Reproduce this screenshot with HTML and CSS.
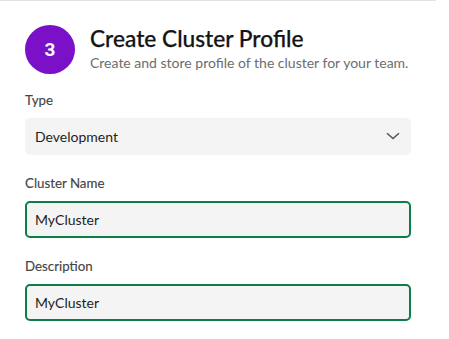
FILE: index.html
```html
<!DOCTYPE html>
<html>
<head>
<meta charset="utf-8">
<link rel="stylesheet" href="styles.css">
</head>
<body>
<div class="card">
  <div class="header">
    <div class="step">3</div>
    <div class="heading">
      <div class="title">Create Cluster Profile</div>
      <div class="subtitle">Create and store profile of the cluster for your team.</div>
    </div>
  </div>
  <div class="field">
    <div class="label">Type</div>
    <div class="box select">
      <span>Development</span>
      <svg class="chev" width="14" height="8" viewBox="0 0 14 8"><path d="M1 1.2 L7 6.6 L13 1.2" fill="none" stroke="#555" stroke-width="1.5"/></svg>
    </div>
  </div>
  <div class="field">
    <div class="label">Cluster Name</div>
    <div class="box input">MyCluster</div>
  </div>
  <div class="field">
    <div class="label">Description</div>
    <div class="box input">MyCluster</div>
  </div>
</div>
</body>
</html>
```
FILE: styles.css
```css
html, body {
  margin: 0;
  padding: 0;
  background: #fff;
  font-family: Lato, "Open Sans", sans-serif;
}
.card {
  width: 436px;
  border-top: 1px solid #e2e2e2;
  padding: 0 25px 0 25px;
  box-sizing: border-box;
}
.header {
  display: flex;
  align-items: center;
  gap: 15px;
  margin-top: 24px;
}
.step {
  width: 50px;
  height: 49px;
  border-radius: 50%;
  background: #7b10c9;
  color: #fff;
  font-family: Roboto, "Liberation Sans", sans-serif;
  font-weight: 700;
  font-size: 19px;
  display: flex;
  align-items: center;
  justify-content: center;
  flex: none;
}
.heading {
  display: flex;
  flex-direction: column;
  margin-top: -3px;
}
.title {
  font-size: 22.7px;
  line-height: 28px;
  color: #141414;
  font-weight: 500;
  -webkit-text-stroke: 0.25px #141414;
}
.subtitle {
  font-size: 14px;
  line-height: 18px;
  color: #6d6d6d;
  margin-top: 1px;
}
.field {
  margin-top: 20px;
  width: 386px;
}
.header + .field {
  margin-top: 18px;
}
.label {
  font-size: 13.3px;
  line-height: 16px;
  color: #454545;
  margin-bottom: 10px;
  -webkit-text-stroke: 0.15px #454545;
}
.box {
  height: 37px;
  box-sizing: border-box;
  background: #f4f4f4;
  border-radius: 5px;
  display: flex;
  align-items: center;
  font-size: 14px;
  color: #1e1e1e;
}
.select {
  padding: 0 11px 0 10px;
  justify-content: space-between;
}
.chev {
  margin-top: -2px;
}
.input {
  border: 2px solid #0c7d46;
  padding: 0 8px;
}
```
